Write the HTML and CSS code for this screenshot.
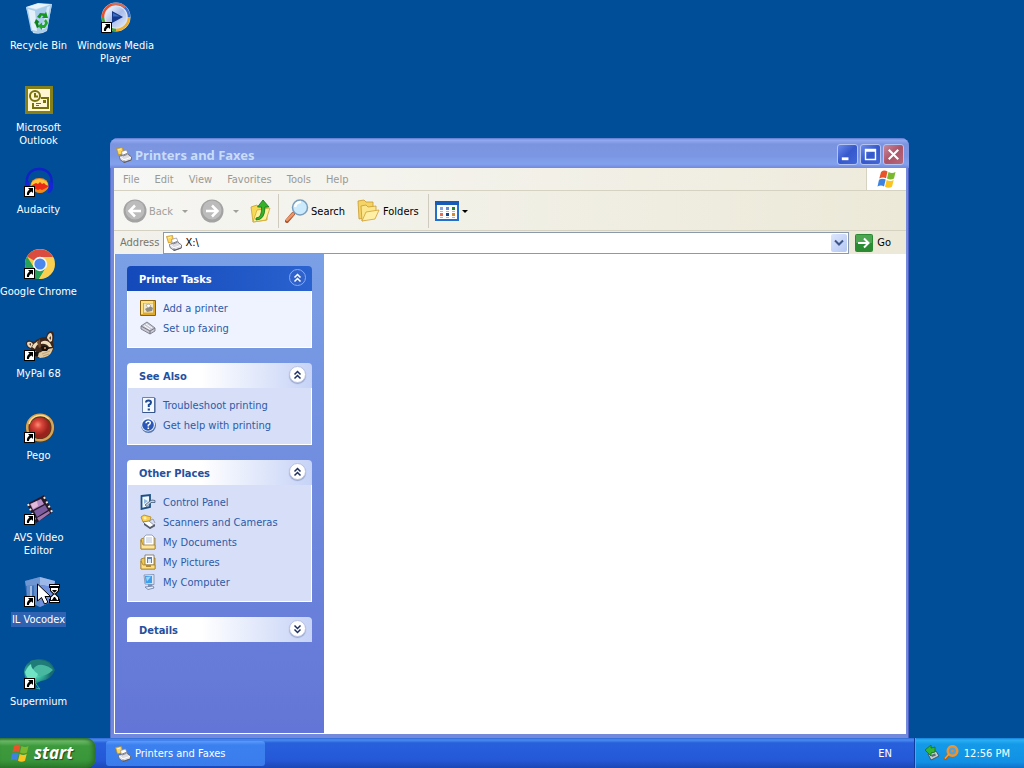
FILE: index.html
```html
<!DOCTYPE html>
<html lang="en">
<head>
  <meta charset="utf-8">
  <meta name="viewport" content="width=device-width, initial-scale=1.0">
  <title>Printers and Faxes</title>
  <link rel="stylesheet" href="styles.css">
</head>
<body>

<!-- shared icons -->
<svg class="defs" width="0" height="0" aria-hidden="true">
  <defs>
    <symbol id="shortcut" viewBox="0 0 11 11">
      <path d="M0 0h11v11H0z" fill="#000"/>
      <path d="M1 1h9v9H1z" fill="#fff"/>
      <path d="M4 2h5v5L7.500 5.500C5.500 6.500 5 7.500 5 9H3c-.5-2 .5-4 2.500-5.500z" fill="#000"/>
    </symbol>
    <symbol id="printer" viewBox="0 0 16 16">
      <path d="M.5 1.500l6-1 1 6-5 1.500z" fill="#ffd65a" stroke="#b88a1c" stroke-width=".7"/>
      <path d="M2 3l3-1" stroke="#fff6c8"/>
      <path d="M5.500 4.500l5-1.500 2 5-6 1.500z" fill="#fff" stroke="#8d8d95" stroke-width=".7"/>
      <path d="M3.500 9.500L11 6.500l4.500 3.500v3L8 15.500 4 12.500z" fill="#dddce2" stroke="#62626c" stroke-width=".8"/>
      <path d="M4 9.800l4 3 7-2.500" fill="none" stroke="#fff"/>
      <path d="M8 13.500v2l7-2.500" fill="none" stroke="#5d5d66"/>
      <path d="M7 9l4-1.500" stroke="#888892"/>
    </symbol>
    <symbol id="flag" viewBox="0 0 20 20">
      <path d="M4 3q3-2.500 6.500-.5L9 9.200Q5.800 7.500 2.300 9.500z" fill="#e8542a"/>
      <path d="M11.500 3q3.500 1.800 7 0L17 9.500q-3.500 1.800-7 0z" fill="#7cb82f"/>
      <path d="M2 10.800q3.300-2 6.700-.3L7 17.500Q4 15.600.5 17.600z" fill="#3f83e0"/>
      <path d="M9.700 11q3.500 1.800 7 0L15 17.800q-3.500 1.800-7 0z" fill="#fbc521"/>
    </symbol>
    <symbol id="chevrons" viewBox="0 0 9 10">
      <path d="M1.500 4.500l3-3 3 3M1.500 8.500l3-3 3 3" fill="none" stroke="currentColor" stroke-width="1.500"/>
    </symbol>
  </defs>
</svg>

<main class="desktop">
  <nav class="icons" aria-label="Desktop">
    <a class="icon" href="#">
      <svg viewBox="0 0 32 32">
        <path d="M3 5l12-4 14 1-5 27q-6 4-14 2z" fill="#c3dcf0"/>
        <path d="M3 5l10 3 16-6-5 26q-3 3-9 3L8 29z" fill="#a9cdea"/>
        <path d="M4 5l11-3.500L27 2.500 13 7z" fill="#e9f4fb"/>
        <path d="M5 7l7 2 2 20-5-1z" fill="#e3f0f9"/>
        <path d="M24 5l3-1-4 22-4 2z" fill="#d6e9f6"/>
        <path d="M14 15l3-4 5 .5 1-2 2 6.500-6 0 1.500-2-2-.5-1.500 3z" fill="#16951f"/>
        <path d="M23 17l2 4-3 5h-3v2l-4-4 4-3.500v2.500h2l1-2-1-2z" fill="#22a52b"/>
        <path d="M13 17l3.500 3-1.500 1 1 4-2 1-2-5-1 .500z" fill="#0d8317"/>
      </svg>
      <span>Recycle Bin</span>
    </a>
    <a class="icon" href="#">
      <svg viewBox="0 0 32 32">
        <rect x="3.500" y="3.500" width="25" height="25" fill="#fff7d2" stroke="#85801a" stroke-width="3"/>
        <circle cx="12" cy="12" r="5" fill="#fff7d2" stroke="#77710d" stroke-width="2"/>
        <path d="M12 9v3.500h3M18 14h7v10H10v-5" fill="none" stroke="#77710d" stroke-width="2"/>
        <path d="M20 16h3v3h-3z" fill="#77710d"/>
        <path d="M13 19.500h5M13 21.500h3" stroke="#77710d"/>
      </svg>
      <span>Microsoft<br>Outlook</span>
    </a>
    <a class="icon" href="#">
      <svg viewBox="0 0 32 32">
        <path d="M4 20C2 8 9 3 16 3s15 5 12 17" fill="none" stroke="#1122c8" stroke-width="2.500"/>
        <path d="M7 21q1-9 9.500-9T26 21q-4 6-9 6t-10-6z" fill="#f58a16"/>
        <path d="M9 16q7-6 15 0l1 4H8z" fill="#ffc43b"/>
        <path d="M8 20l3-2 2-1 2 1 2-2 2 2 2-1 2 2 3 1-3 2-2 1-2 1-2-1-2 1-2-1-2 0z" fill="#e92b17"/>
        <path d="M6 15q-5 1-4 7 1 5 5 5zM26 15q5 1 4 7-1 5-5 5z" fill="#1525d8"/>
        <use href="#shortcut" x="1" y="20" width="11" height="11"/>
      </svg>
      <span>Audacity</span>
    </a>
    <a class="icon" href="#">
      <svg viewBox="0 0 32 32">
        <circle cx="17" cy="16" r="15" fill="#f7cb4b"/>
        <path d="M17 16L4 8.500A15 15 0 0 1 30 9H17z" fill="#da4c3f"/>
        <path d="M4 8.500A15 15 0 0 0 16 31l7-11.500-12 0z" fill="#26a05b"/>
        <path d="M17 9h13q4 12-4 18.500-4 3.500-10 3.500l7-11.500z" fill="#fbcf4f"/>
        <circle cx="17" cy="16" r="7.200" fill="#f3f7f6"/>
        <circle cx="17" cy="16" r="5.600" fill="#4b87ec"/>
        <use href="#shortcut" x="1" y="20" width="11" height="11"/>
      </svg>
      <span>Google Chrome</span>
    </a>
    <a class="icon" href="#">
      <svg viewBox="0 0 32 32">
        <path d="M3 13q1-4 5-2l3 1q5-5 12-5 1-5 5-6 4 1 3 7l-1 4q2 5-1 10-4 6-12 6-8-1-9-9-5-1-5-6z" fill="#3a261c"/>
        <path d="M4 13q1-2 4-1l2 2-2 4q-4-1-4-5zM24 8q1-5 4-5 2 2 1 8l-2 1z" fill="#eadabb"/>
        <path d="M6 14l2-1 0 3zM26 8l2-2 0 4z" fill="#5a4030"/>
        <path d="M9 17q2-4 6-6l2 2q-4 2-5 6zM18 12q5-3 9 1l2 4-3 0q-3-4-8-3z" fill="#f1dfbc"/>
        <path d="M14 12l3-3 1 8-2 1z" fill="#6d4a30"/>
        <path d="M12 21q3 3 6 1l3-2 9-2q-1 5-5 8-4 2-8 2-4-2-5-7z" fill="#e0c9a0"/>
        <path d="M18 17q4-3 8 1l-2 3-5 0z" fill="#17110e"/>
        <circle cx="22" cy="18" r="1" fill="#d5904e"/>
        <path d="M11 22l5 0-1 4-3 0z" fill="#151515"/>
        <path d="M20 26l6-2M19 24l8-3" stroke="#a88f68" stroke-width=".7"/>
        <use href="#shortcut" x="1" y="20" width="11" height="11"/>
      </svg>
      <span>MyPal 68</span>
    </a>
    <a class="icon" href="#">
      <svg viewBox="0 0 32 32">
        <defs>
          <radialGradient id="ruby" cx=".4" cy=".35">
            <stop offset="0" stop-color="#ff8b70"/><stop offset=".4" stop-color="#d8453a"/><stop offset="1" stop-color="#98221c"/>
          </radialGradient>
        </defs>
        <circle cx="17" cy="16" r="14.500" fill="#5c3c17"/>
        <circle cx="17" cy="15.500" r="12.800" fill="none" stroke="#d5a659" stroke-width="2.500"/>
        <path d="M6 12a12 12 0 0 1 20-5" fill="none" stroke="#f9dd98" stroke-width="1.500"/>
        <circle cx="17" cy="16" r="10.500" fill="url(#ruby)"/>
        <use href="#shortcut" x="1" y="20" width="11" height="11"/>
      </svg>
      <span>Pego</span>
    </a>
    <a class="icon" href="#">
      <svg viewBox="0 0 32 32">
        <path d="M4 10L21 1l9 17-17 11z" fill="#25192b"/>
        <path d="M7 10l11-5 3 5-11 6z" fill="#b48bc4"/>
        <path d="M11 17l11-6 3 5-11 7z" fill="#7b5d9f"/>
        <path d="M14 24l12-7 1 2-11 8z" fill="#a276ad"/>
        <path d="M8 10l6-3 1 5-5 3z" fill="#e1b9d9"/>
        <path d="M5 10l8 18M21 3l8 15" fill="none" stroke="#efe9d9" stroke-width="2" stroke-dasharray="2 3"/>
        <use href="#shortcut" x="1" y="20" width="11" height="11"/>
      </svg>
      <span>AVS Video<br>Editor</span>
    </a>
    <a class="icon selected" href="#">
      <svg viewBox="0 0 32 32">
        <path d="M2 5l15-4 15 4-2 20-13 6-13-6z" fill="#3f72ba"/>
        <path d="M2 5l15-4v8L3 10z" fill="#6d96d2"/>
        <path d="M17 1l15 4-1 6-14-2z" fill="#9bb8e9"/>
        <path d="M4 10l5-1v18l-5-2zM11 9l6 0v22l-6-3z" fill="#5f8dca"/>
        <path d="M17 9l14 2-1 14-13 6z" fill="#6f91df"/>
        <path d="M7 10l2 0v16l-2-1z" fill="#a4bde2"/>
        <use href="#shortcut" x="1" y="20" width="11" height="11"/>
      </svg>
      <span>IL Vocodex</span>
      <svg class="pointer" viewBox="0 0 24 22">
        <path d="M.5 1v17l4-3.500 3 6.500 3.500-1.500-3-6h5.500z" fill="#fff" stroke="#000"/>
        <path d="M12 1h11v4h-1v3l-3 3 3 3v2h1v4H12v-4h1v-2l3-3-3-3V5h-1z" fill="#000"/>
        <path d="M13 2h9v1h-9zM13 18h9v1h-9zM14 5h7v2.500L18 10.500h-1L14 7.500zM17 11.500h1l3 3V17h-7v-2.500z" fill="#fff"/>
        <path d="M15 7h5l-2 2.500h-1zM17 14h1l2 3h-5z" fill="#000"/>
      </svg>
    </a>
    <a class="icon" href="#">
      <svg viewBox="0 0 32 32">
        <defs>
          <radialGradient id="teal" cx=".35" cy=".6">
            <stop offset="0" stop-color="#78f0cf"/><stop offset=".5" stop-color="#38b79e"/><stop offset="1" stop-color="#176b70"/>
          </radialGradient>
        </defs>
        <path d="M1 14Q2 2 16 1q12 0 16 11-4 10-14 11l-4 2q-10 0-12-6z" fill="url(#teal)"/>
        <path d="M7 3q5-2 11-1 9 1 13 10-7-5-12-5-7 0-9 5-3-3-3-9z" fill="#1f7c78"/>
        <path d="M10 12q3-6 10-5 6 1 10 5-6 6-14 6-5-1-6-6z" fill="#48b9a0"/>
        <path d="M2 14q3-6 6-8 0 5 7 10-2 5-6 6-6-1-7-8z" fill="#70e3c5"/>
        <path d="M12 24q2 4 5 7l-4-1" fill="none" stroke="#38b79e"/>
        <use href="#shortcut" x="1" y="20" width="11" height="11"/>
      </svg>
      <span>Supermium</span>
    </a>
    <a class="icon" href="#">
      <svg viewBox="0 0 32 32">
        <defs>
          <linearGradient id="disc" x2="1" y2="1">
            <stop offset="0" stop-color="#fff"/><stop offset=".5" stop-color="#a9bdea"/><stop offset="1" stop-color="#e6ecfa"/>
          </linearGradient>
        </defs>
        <circle cx="16" cy="15" r="14.500" fill="#dce3ee"/>
        <path d="M16 2a13 13 0 0 0-13 13" fill="none" stroke="#e8502c" stroke-width="2.500"/>
        <path d="M16 2a13 13 0 0 1 13 13" fill="none" stroke="#3b6fd0" stroke-width="2.500"/>
        <path d="M12 2.500a13 13 0 0 1 13 3" fill="none" stroke="#e06b4c" stroke-width="2"/>
        <path d="M29 15a13 13 0 0 1-13 13" fill="none" stroke="#f2ae22" stroke-width="2.500"/>
        <path d="M16 28A13 13 0 0 1 3 15" fill="none" stroke="#46a43c" stroke-width="2.500"/>
        <circle cx="16" cy="15" r="10.500" fill="url(#disc)"/>
        <path d="M12 9l11 6-11 6z" fill="#163a8c"/>
        <path d="M13 11l7 3.500-7 0z" fill="#3d6fc4"/>
        <use href="#shortcut" x="1" y="20" width="11" height="11"/>
      </svg>
      <span>Windows Media<br>Player</span>
    </a>
  </nav>

  <section class="window" aria-label="Printers and Faxes">
    <header class="titlebar">
      <svg class="small"><use href="#printer"/></svg>
      <h1>Printers and Faxes</h1>
      <div class="controls">
        <button type="button" aria-label="Minimize"><svg viewBox="0 0 20 20"><path d="M4 13h7v3H4z" fill="#fff"/></svg></button>
        <button type="button" aria-label="Maximize"><svg viewBox="0 0 20 20"><path d="M4 4h12v12H4zM5.500 7v7.500h9V7z" fill="#fff" fill-rule="evenodd"/></svg></button>
        <button type="button" class="close" aria-label="Close"><svg viewBox="0 0 20 20"><path d="M5 5l10 10M15 5L5 15" stroke="#fff" stroke-width="2.200"/></svg></button>
      </div>
    </header>

    <div class="menubar">
      <button type="button">File</button>
      <button type="button">Edit</button>
      <button type="button">View</button>
      <button type="button">Favorites</button>
      <button type="button">Tools</button>
      <button type="button">Help</button>
      <div class="brand"><svg><use href="#flag"/></svg></div>
    </div>

    <div class="toolbar">
      <button type="button" class="off">
        <svg viewBox="0 0 24 24"><circle cx="12" cy="12" r="11.500" fill="#a3a3a3"/><circle cx="12" cy="11" r="9.500" fill="#bcbcbc"/><path d="M18 12H7M12 6.500L6.500 12l5.500 5.500" fill="none" stroke="#fff" stroke-width="2.500"/></svg>
        Back
        <i class="arrow"></i>
      </button>
      <button type="button" class="off" aria-label="Forward">
        <svg viewBox="0 0 24 24"><circle cx="12" cy="12" r="11.500" fill="#a3a3a3"/><circle cx="12" cy="11" r="9.500" fill="#bcbcbc"/><path d="M6 12h11M12 6.500l5.500 5.500-5.500 5.500" fill="none" stroke="#fff" stroke-width="2.500"/></svg>
        <i class="arrow"></i>
      </button>
      <button type="button" aria-label="Up">
        <svg viewBox="0 0 24 24">
          <path d="M2 8l6-2 2 2 8 0v13L4 23z" fill="#f5d957" stroke="#c8a12c" stroke-width=".8"/>
          <path d="M4 23l4-12 13-2-4 12z" fill="#fff09a" stroke="#d0a935" stroke-width=".8"/>
          <path d="M7 19q6 0 5.500-11H8.500L14 1l6 7h-4q0 13-9 13z" fill="#35b22a" stroke="#17741a" stroke-width=".8"/>
        </svg>
      </button>
      <hr>
      <button type="button">
        <svg viewBox="0 0 24 24">
          <path d="M8 15l-6 7" stroke="#a65432" stroke-width="4" stroke-linecap="round"/>
          <path d="M8 15l-6 6" stroke="#ec9566" stroke-width="2.500" stroke-linecap="round"/>
          <circle cx="15" cy="8.500" r="7.500" fill="#cbeafc" stroke="#7a9fbe" stroke-width="1.500"/>
          <path d="M10 8q1-5 6-5" fill="none" stroke="#fff" stroke-width="2.500"/>
        </svg>
        Search
      </button>
      <button type="button" class="folders">
        <svg viewBox="0 0 24 24">
          <path d="M1 2l6-1 2 2 7 0v14L2 20z" fill="#f4d465" stroke="#c89a2d" stroke-width=".8"/>
          <path d="M4 7l5-1 2 2 8-1v10L5 22z" fill="#fbe68c" stroke="#c89a2d" stroke-width=".8"/>
          <path d="M5 22l4-9 13-2-4 9z" fill="#fff0a5" stroke="#d0a035" stroke-width=".8"/>
        </svg>
        Folders
      </button>
      <hr>
      <button type="button" aria-label="Views">
        <svg viewBox="0 0 24 24">
          <path d="M1 3h22v18H1z" fill="#fff" stroke="#2270c9" stroke-width="2"/>
          <path d="M0 2h24v4H0z" fill="#185cb5"/>
          <path d="M5 8h3v3H5z" fill="#8ba4dc"/><path d="M11 8h3v3h-3z" fill="#668bd5"/><path d="M17 8h3v3h-3z" fill="#26852d"/>
          <path d="M5 14h3v3H5z" fill="#e26f58"/><path d="M11 14h3v3h-3z" fill="#164789"/><path d="M17 14h3v3h-3z" fill="#d08c31"/>
          <path d="M5 12.500h3m3 0h3m3 0h3M5 18.500h3m3 0h3m3 0h3" stroke="#b2b8c3"/>
        </svg>
        <i class="arrow"></i>
      </button>
    </div>

    <form class="address">
      <label for="path">Address</label>
      <div class="combo">
        <svg class="small"><use href="#printer"/></svg>
        <input id="path" type="text" value="X:\">
        <button type="button" aria-label="Show addresses"><svg viewBox="0 0 10 8"><path d="M1 1.500l4 4 4-4" fill="none" stroke="#3f5788" stroke-width="2"/></svg></button>
      </div>
      <button type="button" class="go">
        <svg viewBox="0 0 18 18"><rect width="18" height="18" rx="2" fill="#2b8b33"/><path d="M1 1h16v8H1z" fill="#4fa652"/><path d="M3 9h10M9 4.500L13.500 9 9 13.500" fill="none" stroke="#fff" stroke-width="2"/></svg>
        Go
      </button>
    </form>

    <div class="content">
      <aside class="sidebar">
        <section class="box primary">
          <header>
            <h2>Printer Tasks</h2>
            <button type="button" aria-label="Collapse"><svg><use href="#chevrons"/></svg></button>
          </header>
          <ul>
            <li><a href="#"><svg viewBox="0 0 16 16"><path d="M.5.5h15v15H.5z" fill="#e2a928" stroke="#8a6416"/><path d="M1 1h12v2H3v11H1z" fill="#ffe07e"/><path d="M4 3.500h9v9H4z" fill="#f0e6c5"/><path d="M5 9l5-3 3 2-1 3-5 1z" fill="#8f8c86"/><path d="M6 5l3-1 2 2-3 2z" fill="#fff" stroke="#98948a" stroke-width=".6"/></svg>Add a printer</a></li>
            <li><a href="#"><svg viewBox="0 0 16 16"><path d="M1 6l6-4 8 6v3l-5 3-9-5z" fill="#c8c9d4" stroke="#6e6f7c" stroke-width=".8"/><path d="M1 6l9 5 5-3" fill="none" stroke="#777885"/><path d="M6 4l6 4M4 5.500l6 4" stroke="#fff"/><path d="M10 11v3" stroke="#6e6f7c"/></svg>Set up faxing</a></li>
          </ul>
        </section>
        <section class="box">
          <header>
            <h2>See Also</h2>
            <button type="button" aria-label="Collapse"><svg><use href="#chevrons"/></svg></button>
          </header>
          <ul>
            <li><a href="#"><svg viewBox="0 0 16 16"><path d="M2.500.5h12v15h-12z" fill="#f4f8ff" stroke="#7083ab"/><path d="M15 1v14.500H2.500" fill="none" stroke="#34558d"/><path d="M6 5.500q0-2 2.500-2t2.500 2q0 1.500-2.200 2.500v2" fill="none" stroke="#1c4a94" stroke-width="2"/><path d="M7.700 11.500h2.200v2H7.700z" fill="#1c4a94"/></svg>Troubleshoot printing</a></li>
            <li><a href="#"><svg viewBox="0 0 16 16"><circle cx="8.500" cy="8.500" r="7.500" fill="#5776af"/><circle cx="8" cy="7.500" r="7" fill="#eef3fb"/><circle cx="8" cy="8" r="5.800" fill="#2b57b8"/><path d="M6 6.300q.2-2 2.300-2t2 1.800q0 1.200-2 2.100v1.300" fill="none" stroke="#fff" stroke-width="1.500"/><path d="M7.500 10.500h1.600V12H7.500z" fill="#fff"/></svg>Get help with printing</a></li>
          </ul>
        </section>
        <section class="box">
          <header>
            <h2>Other Places</h2>
            <button type="button" aria-label="Collapse"><svg><use href="#chevrons"/></svg></button>
          </header>
          <ul>
            <li><a href="#"><svg viewBox="0 0 16 16"><path d="M1.500 2L10 1v12l-8.500 2z" fill="#eff7ff" stroke="#1d5186" stroke-width="1.800"/><path d="M4 5l4 2-4 3z" fill="#8ebce5"/><path d="M5 11l5-4 2-1 3 .5v2h-4l-4 4z" fill="#c7d3e2" stroke="#415a7b" stroke-width=".8"/></svg>Control Panel</a></li>
            <li><a href="#"><svg viewBox="0 0 16 16"><path d="M1 3l3-2 7 2-1 4-7 1z" fill="#f9cf4b" stroke="#b3841d" stroke-width=".8"/><circle cx="5" cy="4" r="1.500" fill="#fff2b3"/><path d="M3 8l6-1 6 5-5 2.500z" fill="#fff" stroke="#777f8c" stroke-width=".8"/><path d="M4 9l6 4 5-3v2l-5 3-6-4z" fill="#535b6b"/><path d="M9 7l4-2 2 4" fill="none" stroke="#9a9eaa"/></svg>Scanners and Cameras</a></li>
            <li><a href="#"><svg viewBox="0 0 16 16"><path d="M1 5l3-1h11v11H1z" fill="#f0c84e" stroke="#9f7925" stroke-width=".8"/><path d="M4 3l2-2h6l2 2v9H4z" fill="#fff" stroke="#8792a8" stroke-width=".8"/><path d="M6 4h6M6 6h6M6 8h6" stroke="#b6c4dc"/><path d="M1 6l2 5h12v4H1z" fill="#ffe69b" stroke="#a5802b" stroke-width=".8"/></svg>My Documents</a></li>
            <li><a href="#"><svg viewBox="0 0 16 16"><path d="M1 5l3-1h11v11H1z" fill="#f0c84e" stroke="#9f7925" stroke-width=".8"/><path d="M5 1h9v10H5z" fill="#fff" stroke="#7c6c4d" stroke-width=".8"/><path d="M7 3h5v6H7z" fill="#5e83b6"/><path d="M8 5h3v4H8z" fill="#d8e4f1"/><path d="M1 7l2 4h12v4H1z" fill="#ffdf80" stroke="#a5802b" stroke-width=".8"/><path d="M6 11h5v2H6z" fill="#b38a31"/></svg>My Pictures</a></li>
            <li><a href="#"><svg viewBox="0 0 16 16"><path d="M4 1l10-.5v10L5 10z" fill="#dfe6f1" stroke="#7b8cad" stroke-width=".8"/><path d="M5 2h7v7H5.500z" fill="#3d9fec"/><path d="M6 3l5-.5-4 5z" fill="#9ed6ff"/><path d="M8 10h4v3H8z" fill="#8193b8"/><path d="M5 13l8-1 1 2-6 1.500z" fill="#e8edf6" stroke="#6579a2" stroke-width=".8"/></svg>My Computer</a></li>
          </ul>
        </section>
        <section class="box closed">
          <header>
            <h2>Details</h2>
            <button type="button" aria-label="Expand"><svg><use href="#chevrons"/></svg></button>
          </header>
        </section>
      </aside>
      <div class="files"></div>
    </div>
  </section>
</main>

<footer class="taskbar">
  <button type="button" class="start"><svg><use href="#flag"/></svg>start</button>
  <button type="button" class="task"><svg class="small"><use href="#printer"/></svg>Printers and Faxes</button>
  <span class="lang">EN</span>
  <div class="tray">
    <svg viewBox="0 0 16 16"><path d="M4 9l8-3 3 5-8 4z" fill="#c3ccd0" stroke="#34484c" stroke-width=".8"/><path d="M7 10l4-1.500 1 2-4 1.500z" fill="#566e72"/><path d="M1 5l6-5 0 3 4-1v5l-4 1v3z" fill="#33b535" stroke="#176e24" stroke-width=".8"/></svg>
    <svg viewBox="0 0 16 16"><path d="M6 9l-4.500 5.500" stroke="#b95f0b" stroke-width="3"/><circle cx="9.500" cy="6" r="4.800" fill="#4ea3df" stroke="#f0932a" stroke-width="2.500"/><path d="M6 9l-4 4.500" stroke="#f7a13a" stroke-width="1.500"/><circle cx="9.500" cy="6" r="1.300" fill="#e98b28"/></svg>
    <time>12:56 PM</time>
  </div>
</footer>

</body>
</html>
```
FILE: styles.css
```css
* {
  box-sizing: border-box;
}
body {
  margin: 0;
  min-height: 100vh;
  display: flex;
  flex-direction: column;
  background: #004e98;
  color: #000;
  font: 11px/13px Tahoma, "DejaVu Sans Condensed", "DejaVu Sans", sans-serif;
}
h1, h2, ul {
  margin: 0;
  padding: 0;
}
ul {
  list-style: none;
}
a {
  color: inherit;
  text-decoration: none;
}
button, input {
  margin: 0;
  padding: 0;
  border: 0;
  background: none;
  color: inherit;
  font: inherit;
}
svg {
  display: block;
  flex: none;
}
.defs {
  position: absolute;
}
.small {
  width: 16px;
  height: 16px;
}

/* desktop */
.desktop {
  flex: 1;
  position: relative;
}
.icons {
  display: grid;
  grid-auto-flow: column;
  grid-template-rows: repeat(9, 82px);
  grid-auto-columns: 77px;
}
.icon {
  position: relative;
  display: flex;
  flex-direction: column;
  align-items: center;
  gap: 4px;
  padding-top: 2px;
  color: #fff;
  text-align: center;
  white-space: nowrap;
}
.icon > svg {
  width: 32px;
  height: 32px;
}
.icon span {
  padding: 1px;
}
.icon.selected span {
  background: #2f62b0;
}
.icon .pointer {
  position: absolute;
  left: 37px;
  top: 9px;
  width: 24px;
  height: 22px;
}

/* window */
.window {
  position: absolute;
  left: 110px;
  top: 138px;
  right: 115px;
  bottom: 0;
  display: flex;
  flex-direction: column;
  padding: 0 3px 4px 4px;
  border-radius: 8px 8px 0 0;
  background: #7389dc;
  box-shadow: inset 1px 1px #5670c8, inset -1px 0 #4c5fc4;
}
.titlebar {
  display: flex;
  align-items: center;
  gap: 3px;
  height: 30px;
  margin: 0 -3px 0 -4px;
  padding: 3px 5px 0 6px;
  border-radius: 8px 8px 0 0;
  background: linear-gradient(#5b76cc 0, #93aaf0 2px, #7b94e0 6px, #7b97e3 18px, #82a2ee 26px, #7288dc 30px);
}
.titlebar h1 {
  flex: 1;
  color: #c9dcf8;
  font: bold 13px/16px "Noto Sans", sans-serif;
}
.controls {
  display: flex;
  gap: 2px;
}
.controls button {
  width: 21px;
  height: 21px;
  border: 1px solid #b3c4f0;
  border-radius: 3px;
  background: linear-gradient(135deg, #6d8cec, #3558cc 50%, #4468d8);
}
.controls .close {
  background: linear-gradient(135deg, #c9889d, #ab5468 50%, #b6687c);
}
.controls svg {
  width: 19px;
  height: 19px;
}
.menubar {
  display: flex;
  height: 23px;
  padding-left: 1px;
  border-bottom: 1px solid #d5d2c2;
  background: linear-gradient(90deg, #f7f7f5, #eeebdc);
  color: #9a9a94;
}
.menubar button {
  padding: 0 8px 0 7px;
}
.menubar button:first-child {
  padding-left: 8px;
}
.brand {
  display: flex;
  align-items: center;
  justify-content: center;
  width: 40px;
  margin-left: auto;
  border-left: 1px solid #d5d2c2;
  background: #fff;
}
.brand svg {
  width: 20px;
  height: 20px;
}
.toolbar {
  display: flex;
  align-items: center;
  height: 40px;
  padding: 1px 8px 0 6px;
  border-bottom: 1px solid #d5d2c2;
  background: linear-gradient(90deg, #f6f6f3, #ece9d8);
}
.toolbar button {
  display: flex;
  align-items: center;
  gap: 2px;
  padding: 0 3px;
}
.toolbar svg {
  width: 24px;
  height: 24px;
}
.toolbar .off {
  padding-right: 9px;
  color: #a0a09a;
}
.toolbar .off + .off {
  padding-right: 7px;
}
.toolbar .folders {
  margin: 0 4px 0 6px;
}
.toolbar hr {
  align-self: stretch;
  width: 1px;
  margin: 2px 3px 2px 2px;
  border: 0;
  background: #cfccbf;
}
.arrow {
  margin-left: 1px;
  border: 3px solid transparent;
  border-top-color: currentColor;
  border-bottom: 0;
}
.off .arrow {
  margin-left: 7px;
}
.address {
  display: flex;
  align-items: center;
  gap: 4px;
  height: 23px;
  padding: 0 15px 0 6px;
  background: linear-gradient(90deg, #f2f1eb, #ece9d8);
}
.address label {
  color: #77756c;
}
.combo {
  flex: 1;
  display: flex;
  align-items: center;
  gap: 3px;
  height: 22px;
  padding: 0 1px 0 2px;
  border: 1px solid #8a9aaa;
  background: #fff;
}
.combo input {
  flex: 1;
  min-width: 0;
  outline: 0;
}
.combo button {
  display: flex;
  align-items: center;
  justify-content: center;
  width: 16px;
  height: 18px;
  border-radius: 2px;
  background: linear-gradient(135deg, #dce6fc, #b4c7f4);
}
.combo button svg {
  width: 10px;
  height: 8px;
}
.go {
  display: flex;
  align-items: center;
  gap: 4px;
  padding-left: 2px;
}
.go svg {
  width: 18px;
  height: 18px;
}

/* folder view */
.content {
  flex: 1;
  display: flex;
  border: solid #fff;
  border-width: 0 0 1px 1px;
  background: #fff;
}
.sidebar {
  display: flex;
  flex-direction: column;
  gap: 15px;
  width: 209px;
  padding: 12px;
  background: linear-gradient(#7ba0e6, #6375d6);
}
.files {
  flex: 1;
}
.box header {
  display: flex;
  align-items: center;
  justify-content: space-between;
  height: 25px;
  padding: 0 6px 2px 12px;
  border-radius: 4px 4px 0 0;
  background: linear-gradient(90deg, #fff 40%, #c6d3f7);
}
.box h2 {
  padding-top: 4px;
  color: #23509f;
  font-size: 11px;
  line-height: 13px;
}
.box header button {
  display: flex;
  align-items: center;
  justify-content: center;
  width: 17px;
  height: 17px;
  border: 1px solid #b9c4e4;
  border-radius: 50%;
  background: #fff;
  color: #1c2f66;
  box-shadow: 0 1px 1px #98a5cc;
}
.box header svg {
  width: 9px;
  height: 10px;
}
.box ul {
  padding: 6px 12px 10px;
  border: 1px solid #fff;
  border-top: 0;
  background: #d6dff7;
}
.box li {
  height: 20px;
}
.box a {
  display: flex;
  align-items: center;
  gap: 7px;
  height: 22px;
  color: #2d5aa8;
}
.box a svg {
  width: 16px;
  height: 16px;
}
.primary header {
  background: linear-gradient(90deg, #1349b8, #2a62d0);
}
.primary h2 {
  color: #fff;
}
.primary header button {
  border-color: #8eabea;
  background: #2f62cc;
  color: #fff;
  box-shadow: none;
}
.primary ul {
  background: #eff3ff;
}
.closed svg {
  transform: rotate(180deg);
}

/* taskbar */
.taskbar {
  display: flex;
  align-items: stretch;
  height: 30px;
  background: linear-gradient(#3168d5 0, #4a8cf0 2px, #2860dc 5px, #2458d6 22px, #1c47b4 30px);
  color: #fff;
}
.start {
  display: flex;
  align-items: center;
  gap: 4px;
  width: 96px;
  padding: 0 0 0 10px;
  border-radius: 0 10px 10px 0;
  background: linear-gradient(#2f7a30 0, #6cba68 3px, #3d9a3c 8px, #3a963a 22px, #2b7a2c 30px);
  box-shadow: inset -3px 0 4px #2b6e2b;
  font: italic bold 17px/20px "Open Sans", "Noto Sans", sans-serif;
  text-shadow: 1px 1px 1px #1c4a1c;
}
.start svg {
  width: 20px;
  height: 20px;
}
.task {
  display: flex;
  align-items: center;
  gap: 4px;
  width: 159px;
  margin: 3px 0 2px 10px;
  padding: 0 9px;
  border-radius: 3px;
  background: linear-gradient(#5a9af8, #3c80f0 4px, #3a7cec);
}
.lang {
  margin-left: auto;
  padding: 9px 22px 0 0;
}
.tray {
  display: flex;
  align-items: center;
  gap: 3px;
  padding: 0 14px 0 9px;
  border-left: 1px solid #0d3c9c;
  background: linear-gradient(#1380d8 0, #2bb0f4 2px, #149ae8 6px, #1290e4 24px, #1070c8 30px);
  box-shadow: inset 1px 0 #34b4f4;
}
.tray svg {
  width: 16px;
  height: 16px;
}
.tray time {
  margin-left: 2px;
}
```
